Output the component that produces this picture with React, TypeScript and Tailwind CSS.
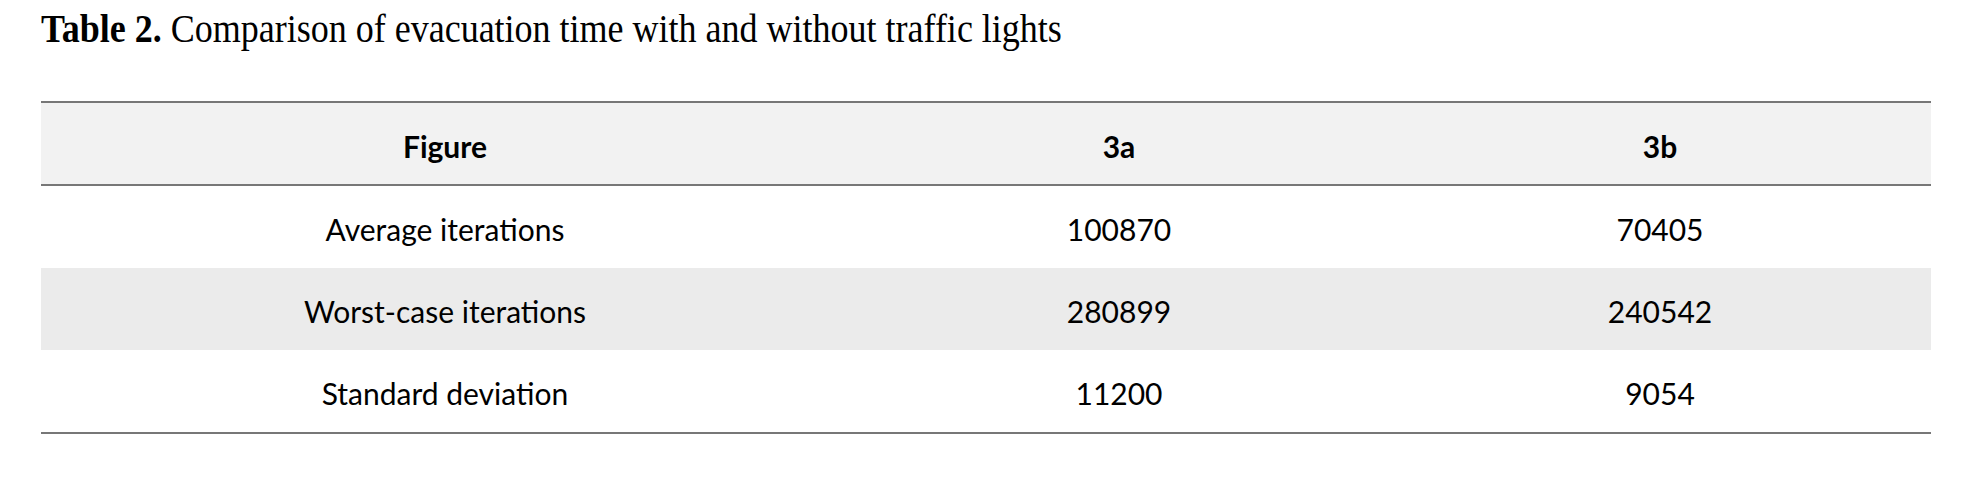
const rows = [
  { label: "Average iterations", a: "100870", b: "70405", shade: false },
  { label: "Worst-case iterations", a: "280899", b: "240542", shade: true },
  { label: "Standard deviation", a: "11200", b: "9054", shade: false },
];

const cols = "grid grid-cols-[808px_540px_542px]";

const App = () => {
  return (
    <div className="min-h-[477px] w-[1975px] bg-white pl-[41px] text-black">
      <h1
        className="h-[101px] origin-left scale-x-[0.9] pt-[9px] text-[40px] leading-none whitespace-nowrap"
        style={{ fontFamily: '"Liberation Serif", "Times New Roman", serif' }}
      >
        <span className="font-bold">Table 2.</span> Comparison of evacuation time with and without traffic lights
      </h1>

      <div
        className="w-[1890px] border-y-2 border-[#777777] text-[30px]"
        style={{ fontFamily: 'Lato, "Open Sans", sans-serif' }}
      >
        <div className={`${cols} h-[83px] items-center border-b-2 border-[#777777] bg-[#f2f2f2] pt-[5px] text-center font-bold`}>
          <div>Figure</div>
          <div>3a</div>
          <div>3b</div>
        </div>
        {rows.map((row) => (
          <div
            key={row.label}
            className={`${cols} h-[82px] items-center pt-[5px] text-center ${row.shade ? "bg-[#ebebeb]" : "bg-white"}`}
          >
            <div>{row.label}</div>
            <div>{row.a}</div>
            <div>{row.b}</div>
          </div>
        ))}
      </div>
    </div>
  );
};

export default App;
